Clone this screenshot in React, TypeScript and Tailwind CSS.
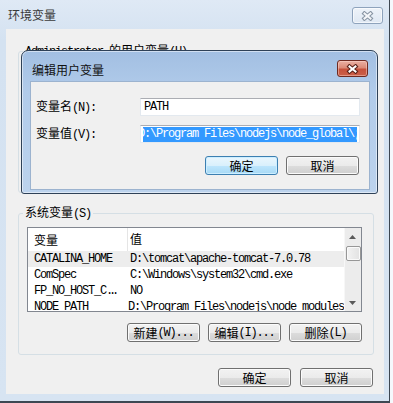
import clsx from "clsx";

const CJK = /([\u3400-\u9fff]+)/;

// SimSun-like look: Latin runs in a 6px-advance mono, CJK runs in Noto CJK
function Txt({ children }: { children: string }) {
  const parts = children.split(CJK).filter((p) => p !== "");
  return (
    <>
      {parts.map((p, i) =>
        CJK.test(p) ? (
          <span key={i} className="font-['Noto_Sans_CJK_SC',sans-serif] tracking-normal">
            {p}
          </span>
        ) : (
          <span key={i} className="font-['Liberation_Mono',monospace] tracking-[-1.2px]">
            {p}
          </span>
        )
      )}
    </>
  );
}

function CloseGlyph({ outline, fill }: { outline: string; fill: string }) {
  return (
    <svg width="13" height="10" viewBox="0 0 13 10">
      <path d="M3.5 2.5 L9.5 7.5 M9.5 2.5 L3.5 7.5" stroke={outline} strokeWidth="4.2" strokeLinecap="square" fill="none" />
      <path d="M3.5 2.5 L9.5 7.5 M9.5 2.5 L3.5 7.5" stroke={fill} strokeWidth="2" strokeLinecap="square" fill="none" />
    </svg>
  );
}

function Btn({ label, primary }: { label: string; primary?: boolean }) {
  return (
    <button
      type="button"
      className={clsx(
        "flex h-[19px] w-[73px] items-center justify-center rounded-[3px] border text-[12px] leading-[14px] text-black",
        primary
          ? "border-[#3c7fb1] bg-[linear-gradient(#eaf6fd_0%,#d9f0fc_50%,#bee6fd_50%,#a7d9f5_100%)] shadow-[inset_0_0_0_1px_#cdeeff]"
          : "border-[#707070] bg-[linear-gradient(#f2f2f2_0%,#ebebeb_50%,#dddddd_50%,#cfcfcf_100%)] shadow-[inset_0_0_0_1px_#fbfbfb]"
      )}
    >
      <Txt>{label}</Txt>
    </button>
  );
}

const SYS_VARS = [
  { name: "CATALINA_HOME", value: "D:\\tomcat\\apache-tomcat-7.0.78" },
  { name: "ComSpec", value: "C:\\Windows\\system32\\cmd.exe" },
  { name: "FP_NO_HOST_C", value: "NO", cut: true },
  { name: "NODE_PATH", value: "D:\\Program Files\\nodejs\\node_modules" },
];

function ScrollArrow({ up }: { up?: boolean }) {
  return (
    <div className="flex h-[17px] items-center justify-center">
      <svg width="7" height="4" viewBox="0 0 7 4">
        <polygon points={up ? "0,4 3.5,0 7,4" : "0,0 7,0 3.5,4"} fill="#5a5a5a" />
      </svg>
    </div>
  );
}

function SystemList() {
  return (
    <div className="flex h-[85px] w-[335px] border border-[#828790] bg-white">
      <div className="flex flex-1 flex-col overflow-hidden">
        <div className="flex h-[23px] shrink-0 items-center">
          <div className="flex h-full w-[100px] items-center border-r border-[#e5e5e5] pl-[6px] leading-[16px]">
            <Txt>变量</Txt>
          </div>
          <div className="pl-[2px] leading-[16px]">
            <Txt>值</Txt>
          </div>
        </div>
        {SYS_VARS.map((v, i) => (
          <div
            key={v.name}
            className={clsx(
              "flex h-[16px] shrink-0 items-center whitespace-nowrap font-['Liberation_Mono',monospace] tracking-[-1.2px]",
              i === 0 && "bg-[#ededed]"
            )}
          >
            <div className="w-[100px] pl-[6px]">
              {v.name}
              {v.cut && <span className="tracking-[-4.2px]">...</span>}
            </div>
            <div className="pl-[2px]">{v.value}</div>
          </div>
        ))}
      </div>
      <div className="flex w-[17px] shrink-0 flex-col bg-[#ececec] shadow-[inset_1px_0_0_#f7f7f7]">
        <ScrollArrow up />
        <div className="ml-[2px] mt-[1px] h-[15px] w-[15px] rounded-[2px] border border-[#979797] bg-[linear-gradient(90deg,#f3f3f3,#e2e2e2)] shadow-[inset_0_0_0_1px_#fafafa]" />
        <div className="flex-1" />
        <ScrollArrow />
      </div>
    </div>
  );
}

function EditDialog() {
  return (
    <div className="absolute left-[15px] top-[21px] flex h-[144px] w-[357px] flex-col rounded-t-[7px] rounded-b-[3px] border border-[#2e4157] bg-[linear-gradient(#a2bfe2,#b1cbea_40px,#bcd3ed)] pb-[3px] pl-[8px] pr-[7px] shadow-[inset_0_0_0_1px_rgba(255,255,255,0.5)]">
      <div className="flex h-[30px] shrink-0 items-start">
        <span className="ml-[2px] mt-[11px] font-['Noto_Sans_CJK_SC',sans-serif] text-[12px] leading-[16px] text-[#111]">
          编辑用户变量
        </span>
        <button
          type="button"
          className="ml-auto mr-[2px] mt-[9px] flex h-[17px] w-[31px] items-center justify-center rounded-[3px] border border-[#6e2a21] bg-[linear-gradient(#eab0a3_0%,#dc8b78_45%,#c6513b_55%,#cb6049_100%)] shadow-[inset_0_0_0_1px_rgba(255,220,210,0.45)]"
        >
          <CloseGlyph outline="#5a2119" fill="#ffffff" />
        </button>
      </div>
      <div className="flex flex-1 flex-col border border-[#9cb3cf] bg-[#f0f0f0]">
        <div className="grid grid-cols-[104px_220px] items-center gap-y-[9px] pl-[5px] pt-[16px]">
          <div className="leading-[16px]">
            <Txt>变量名(N):</Txt>
          </div>
          <div className="flex h-[18px] items-center border border-[#e3e9ef] border-t-[#abadb3] bg-white pl-[3px] font-['Liberation_Mono',monospace] tracking-[-1.2px]">
            PATH
          </div>
          <div className="leading-[16px]">
            <Txt>变量值(V):</Txt>
          </div>
          <div className="flex h-[18px] items-center border border-[#e3e9ef] border-t-[#abadb3] bg-white px-[2px]">
            <div className="flex flex-1 overflow-hidden">
              <span className="ml-[-5px] whitespace-nowrap bg-[#3399ff] pr-[6px] font-['Liberation_Mono',monospace] leading-[15px] tracking-[-1.2px] text-white">
                {"D:\\Program Files\\nodejs\\node_global\\;"}
              </span>
            </div>
          </div>
        </div>
        <div className="mt-[13px] flex justify-end gap-[8px] pr-[10px]">
          <Btn label="确定" primary />
          <Btn label="取消" />
        </div>
      </div>
    </div>
  );
}

export default function App() {
  return (
    <div className="h-[403px] w-[393px] overflow-hidden bg-[#f5f8fc] text-[12px] text-black">
      <div className="flex h-[403px] w-[390px] flex-col border-b-2 border-r border-[#3d4752] bg-[linear-gradient(#dfe9f5,#d4e2f1_40px,#d7e4f2)]">
        <div className="flex h-[29px] shrink-0 items-start pl-[8px] pr-[6px]">
          <span className="mt-[7px] font-['Noto_Sans_CJK_SC',sans-serif] leading-[16px] text-[#3a3a3a]">
            环境变量
          </span>
          <button
            type="button"
            className="ml-auto mt-[7px] flex h-[17px] w-[31px] items-center justify-center rounded-[3px] border border-[#8ea3bc] bg-[linear-gradient(#eef3f9,#dfe8f3)] shadow-[inset_0_0_0_1px_rgba(255,255,255,0.6)]"
          >
            <CloseGlyph outline="#8895a4" fill="#f4f6f9" />
          </button>
        </div>

        <div className="relative mb-[7px] ml-[6px] mr-[5px] flex flex-1 flex-col bg-[#f0f0f0] pl-[12px] pr-[10px]">
          <fieldset className="mt-[13px] rounded-[3px] border border-[#d5dfe5] pl-[4px]">
            <legend className="px-[2px] leading-[16px]">
              <Txt>Administrator 的用户变量(U)</Txt>
            </legend>
            <div className="h-[132px]" />
          </fieldset>

          <fieldset className="mt-[11px] rounded-[3px] border border-[#d5dfe5] pb-[12px] pl-[4px] pr-[11px]">
            <legend className="px-[2px] leading-[16px]">
              <Txt>系统变量(S)</Txt>
            </legend>
            <div className="pl-[4px]">
              <div className="mt-[5px]">
                <SystemList />
              </div>
              <div className="mt-[11px] flex justify-end gap-[8px]">
                <Btn label="新建(W)..." />
                <Btn label="编辑(I)..." />
                <Btn label="删除(L)" />
              </div>
            </div>
          </fieldset>

          <div className="mt-[13px] flex justify-end gap-[9px] pr-[1px]">
            <Btn label="确定" />
            <Btn label="取消" />
          </div>

          <EditDialog />
        </div>
      </div>
    </div>
  );
}
